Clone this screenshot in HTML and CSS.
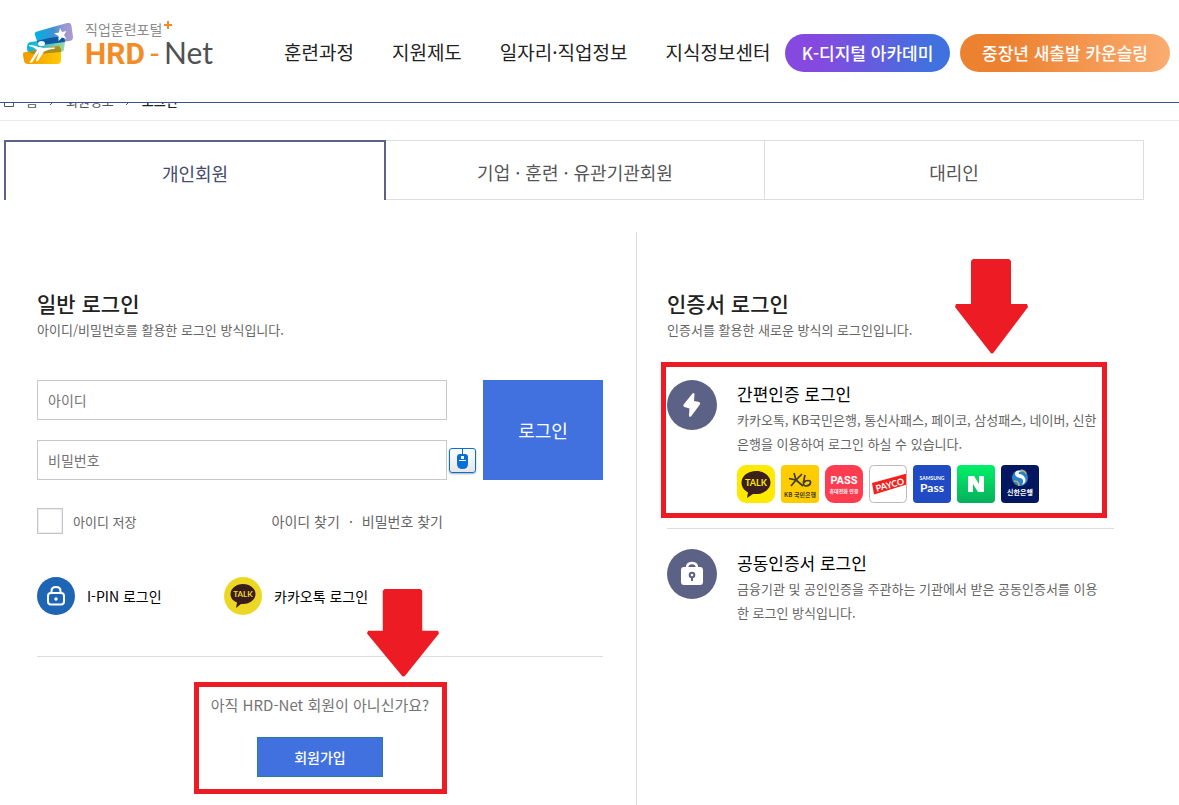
FILE: index.html
```html
<!DOCTYPE html>
<html lang="ko">
<head>
<meta charset="utf-8">
<meta name="viewport" content="width=device-width, initial-scale=1">
<title>HRD-Net 로그인</title>
<link rel="stylesheet" href="styles.css">
</head>
<body>
<header class="header">
  <a class="logo" href="#">
    <svg class="logo-mark" viewBox="0 0 50 41" aria-hidden="true">
      <defs>
        <linearGradient id="sky" x1="0" x2="1"><stop offset="0" stop-color="#00b3e6"/><stop offset=".5" stop-color="#3f8fd0"/><stop offset=".75" stop-color="#9a97d0"/><stop offset="1" stop-color="#a99bd0"/></linearGradient>
        <linearGradient id="sea" x1="0" x2="1"><stop offset="0" stop-color="#00b4e4"/><stop offset=".5" stop-color="#4fbcc0"/><stop offset="1" stop-color="#a5d6a2"/></linearGradient>
        <linearGradient id="sun" x1="0" x2="1"><stop offset="0" stop-color="#f39a00"/><stop offset="1" stop-color="#fdc900"/></linearGradient>
      </defs>
      <path d="M7 19 38 15q4 0 4 4l-1 7q0 3-4 3L8 31Q4 30 4 25q0-5 3-6z" fill="url(#sea)"/>
      <path d="M14 8.500 44 0q4-1 4.500 3L50 14q0 4-4 4l-28 4q-3 0-4-4l-2-6q-1-3 2-3.500z" fill="url(#sky)"/>
      <path d="M14 18 26 15l15-2 1 6-24 3q-3 0-4-4z" fill="#0a5ba3"/>
      <path d="M0 31q0-2 3-2l32-6q2 0 3 3v11q0 4-4 4H5q-4 0-4-4-1-3-1-6z" fill="url(#sun)"/>
      <path d="M6 28.500 35 23q2 0 3 3v3l-23 2q-7 1-9-2.500z" fill="#a98f1c"/>
      <path d="m37 5 2 4 4.500-1-2.500 4 2.500 4-4.500-1.500-3.500 3.500v-5l-4.500-2.500 5-1z" fill="#fff"/>
      <path d="M6 22q6 0 9 2 3 0 5 1l12-.5v1q-7 1-11 3l-6 9.500h-2l3-9-7 10.500H6.500L14 27q-3-3-8-4z" fill="#fff"/>
      <ellipse cx="18.500" cy="20.500" rx="3.500" ry="2.500" fill="#fff"/>
    </svg>
    <span class="logo-text">
      <span class="logo-sub">직업훈련포털<svg class="logo-plus" viewBox="0 0 8 8" aria-hidden="true"><path d="M3 0h2v3h3v2H5v3H3V5H0V3h3z" fill="#f28c28"/></svg></span>
      <span class="logo-name"><b>HRD</b><i>-</i><span>Net</span></span>
    </span>
  </a>
  <nav class="nav">
    <a href="#">훈련과정</a>
    <a href="#">지원제도</a>
    <a href="#">일자리·직업정보</a>
    <a href="#">지식정보센터</a>
  </nav>
  <div class="pills">
    <a class="pill pill-violet" href="#">K-디지털 아카데미</a>
    <a class="pill pill-orange" href="#">중장년 새출발 카운슬링</a>
  </div>
</header>

<div class="crumbs">
  <svg class="crumb-home" viewBox="0 0 12 12" aria-hidden="true"><path d="M1.500 4 6 1l4.500 3v7.500h-9z"/></svg>
  <a href="#">홈</a>
  <svg class="crumb-arrow" viewBox="0 0 6 10" aria-hidden="true"><path d="m1 1 4 4-4 4"/></svg>
  <a href="#">회원정보</a>
  <svg class="crumb-arrow" viewBox="0 0 6 10" aria-hidden="true"><path d="m1 1 4 4-4 4"/></svg>
  <strong>로그인</strong>
</div>

<div class="tabs" role="tablist">
  <button class="tab tab-active" type="button" role="tab" aria-selected="true">개인회원</button>
  <button class="tab" type="button" role="tab" aria-selected="false">기업 · 훈련 · 유관기관회원</button>
  <button class="tab" type="button" role="tab" aria-selected="false">대리인</button>
</div>

<main class="panels">
  <section class="panel panel-left">
    <h2 class="title">일반 로그인</h2>
    <p class="subtitle">아이디/비밀번호를 활용한 로그인 방식입니다.</p>
    <form class="login">
      <div class="fields">
        <input class="field" type="text" placeholder="아이디" aria-label="아이디">
        <span></span>
        <input class="field" type="password" placeholder="비밀번호" aria-label="비밀번호">
        <button class="mouse" type="button" aria-label="마우스 입력기">
          <svg viewBox="0 0 25 23" aria-hidden="true"><path d="M12 0h1v5h-1z" fill="#0670d6"/><path d="M7 8q0-3 3-3h5q3 0 3 3v7q0 5-5.500 5T7 15z" fill="#0670d6"/><path d="M11 7h3v3h-3zM9 11h7v1H9z" fill="#fff"/></svg>
        </button>
      </div>
      <button class="submit" type="submit">로그인</button>
    </form>
    <div class="options">
      <label class="save"><input class="check" type="checkbox">아이디 저장</label>
      <div class="find"><a href="#">아이디 찾기</a><span>·</span><a href="#">비밀번호 찾기</a></div>
    </div>
    <div class="social">
      <a href="#">
        <svg class="social-icon" viewBox="0 0 38 38" aria-hidden="true"><circle cx="19" cy="19" r="19" fill="#1e66b3"/><g fill="none" stroke="#fff" stroke-width="2"><rect x="11" y="16" width="16" height="11.500" rx="3"/><path d="M14.500 16v-2q0-4 4.500-4t4.500 4v2"/></g><circle cx="19" cy="22" r="1.700" fill="#fff"/></svg>
        I-PIN 로그인
      </a>
      <a href="#">
        <svg class="social-icon" viewBox="0 0 38 38" aria-hidden="true"><circle cx="19" cy="19" r="19" fill="#ecd824"/><path d="M19 7c7 0 12.500 4.500 12.500 10S26 27 19 27l-2 0-5 4 1-5.500C9 24 6.500 21 6.500 17 6.500 11.500 12 7 19 7z" fill="#3b1c1c"/><text class="brand-lato" x="19" y="20" font-size="8" fill="#ecd824">TALK</text></svg>
        카카오톡 로그인
      </a>
    </div>
    <div class="join">
      <svg class="arrow arrow-join" viewBox="0 0 73 95" preserveAspectRatio="none" aria-hidden="true"><path d="M18 0h36l2 2v43h16l1 3L39 93q-2 3-4 0L0 48l1-3h15V2z" fill="#ed1c24"/></svg>
      <p>아직 HRD-Net 회원이 아니신가요?</p>
      <button class="join-button" type="button">회원가입</button>
    </div>
  </section>

  <section class="panel panel-right">
    <h2 class="title">인증서 로그인</h2>
    <p class="subtitle">인증서를 활용한 새로운 방식의 로그인입니다.</p>
    <article class="method method-marked">
      <svg class="arrow arrow-method" viewBox="0 0 73 95" preserveAspectRatio="none" aria-hidden="true"><path d="M18 0h36l2 2v43h16l1 3L39 93q-2 3-4 0L0 48l1-3h15V2z" fill="#ed1c24"/></svg>
      <svg class="method-icon" viewBox="0 0 50 50" aria-hidden="true"><circle cx="25" cy="25" r="25" fill="#5c6286"/><path d="M25.500 13.500q2-1.500 2 1L27 21l5 1q2 1 .5 3L24 36.500q-2 1-2-1l.5-7-5-1.500q-2-1-.5-3z" fill="#fff"/></svg>
      <div class="method-body">
        <h3>간편인증 로그인</h3>
        <p>카카오톡, KB국민은행, 통신사패스, 페이코, 삼성패스, 네이버, 신한은행을 이용하여 로그인 하실 수 있습니다.</p>
        <div class="brands">
          <svg viewBox="0 0 38 38" role="img" aria-label="카카오톡"><rect width="38" height="38" rx="9" fill="#ffe900"/><path d="M19 6c8 0 14.500 5 14.500 11.500S27 29 19 29h-3l-6 4 1-5.500C7 25 4.500 22 4.500 17.500 4.500 11 11 6 19 6z" fill="#3b1e1e"/><text class="brand-lato" x="19" y="21" font-size="9" fill="#ffe900">TALK</text></svg>
          <svg viewBox="0 0 38 38" role="img" aria-label="KB국민은행"><rect width="38" height="38" rx="4" fill="#fc0"/><g fill="none" stroke="#3f3a2b" stroke-width="1.700"><path d="M8 13.500 15 15l6-6M13 8l2 7-5 6M15 15l7 6"/><path d="m24 10-1.500 7q-.5 4 2.500 4 4-.5 4.500-3t-2.500-2.500-4 2"/></g><text class="brand-kr" x="19" y="32" font-size="6" fill="#3f3a2b">KB 국민은행</text></svg>
          <svg viewBox="0 0 38 38" role="img" aria-label="PASS"><rect width="38" height="38" rx="9" fill="#ff3c50"/><text class="brand-roboto" x="19" y="19" font-size="11" fill="#fff">PASS</text><text class="brand-kr" x="19" y="28" font-size="5" fill="#fff">휴대전화 인증</text></svg>
          <svg viewBox="0 0 38 38" role="img" aria-label="페이코"><defs><clipPath id="payco"><rect x="1" y="1" width="36" height="36" rx="4"/></clipPath></defs><rect x=".5" y=".5" width="37" height="37" rx="4" fill="#fff" stroke="#bbb"/><g clip-path="url(#payco)"><path d="M3 18 38 8.500v11L5 29.500z" fill="#f5201c"/><text class="brand-lato" x="21" y="23" font-size="9" fill="#fff" transform="rotate(-15 21 20)">PAYCO</text></g></svg>
          <svg viewBox="0 0 38 38" role="img" aria-label="삼성패스"><rect width="38" height="38" rx="4" fill="#204bc4"/><text class="brand-lato" x="19" y="15" font-size="5" fill="#fff">SAMSUNG</text><text class="brand-lato" x="19" y="27" font-size="12" fill="#fff">Pass</text></svg>
          <svg viewBox="0 0 38 38" role="img" aria-label="네이버"><defs><linearGradient id="naver" x2="0" y2="1"><stop stop-color="#00f069"/><stop offset="1" stop-color="#06af5b"/></linearGradient></defs><rect width="38" height="38" rx="4" fill="url(#naver)"/><path d="M11 11h6l5 8v-8h5v16h-6l-5-8v8h-5z" fill="#fff"/></svg>
          <svg viewBox="0 0 38 38" role="img" aria-label="신한은행"><rect width="38" height="38" rx="4" fill="#02175f"/><circle cx="19" cy="13" r="8" fill="#2a83c9"/><path d="M24 6q-10-2-10 3 0 3 5 4t2 7q5-3 3-7t-6-4q-2-3 6-3z" fill="#fff"/><path d="M13 16q5 0 5 5M20 5q5 1 5 4" fill="none" stroke="#c4a964" stroke-width="1.500"/><text class="brand-kr" x="19" y="30" font-size="7" fill="#fff">신한은행</text></svg>
        </div>
      </div>
    </article>
    <article class="method method-plain">
      <svg class="method-icon" viewBox="0 0 50 50" aria-hidden="true"><circle cx="25" cy="25" r="25" fill="#5c6286"/><path d="M20 19q0-5 5-5t5 5" fill="none" stroke="#fff" stroke-width="2.500"/><rect x="14" y="18" width="22" height="18" rx="3" fill="#fff"/><path d="M21.500 18q3.500-4 7 0z" fill="#5c6286"/><circle cx="25" cy="26" r="2.300" fill="none" stroke="#5c6286" stroke-width="2"/><path d="M25 28v4" stroke="#5c6286" stroke-width="2"/></svg>
      <div class="method-body">
        <h3>공동인증서 로그인</h3>
        <p>금융기관 및 공인인증을 주관하는 기관에서 받은 공동인증서를 이용한 로그인 방식입니다.</p>
      </div>
    </article>
  </section>
</main>
</body>
</html>
```

FILE: styles.css
```css
* { box-sizing: border-box; }
body {
  margin: 0;
  min-height: 100vh;
  display: flex;
  flex-direction: column;
  background: #fff;
  color: #222;
  font-family: "Noto Sans CJK KR", sans-serif;
  font-size: 14px;
}
a { color: inherit; text-decoration: none; }
button, input { font: inherit; margin: 0; }
h2, h3, p { margin: 0; font-weight: 400; }
svg { display: block; flex: none; }

/* Header stays above the scrolled page */
.header {
  position: fixed;
  inset: 0 0 auto 0;
  z-index: 2;
  display: flex;
  align-items: center;
  height: 103px;
  padding: 3px 9px 0 23px;
  background: #fff;
  border-bottom: 1px solid #3c5390;
}
.logo { display: flex; gap: 12px; width: 261px; padding-bottom: 20px; }
.logo-mark { width: 50px; height: 41px; margin-top: 4px; }
.logo-text { display: flex; flex-direction: column; }
.logo-sub { display: flex; gap: 2px; font-size: 14px; line-height: 20px; color: #8b8b8b; }
.logo-plus { width: 8px; height: 8px; margin-top: 2px; }
.logo-name { display: flex; gap: 4px; align-items: baseline; line-height: 26px; font-size: 30px; color: #505153; }
.logo-name b { font-family: Roboto, sans-serif; font-weight: 700; color: #f28c28; }
.logo-name i { font-family: Lato, sans-serif; font-style: normal; color: #f28c28; }
.logo-name span { font-family: Lato, sans-serif; font-weight: 400; }
.nav { display: flex; gap: 38px; padding-bottom: 2px; font-size: 19px; white-space: nowrap; }
.pills { display: flex; gap: 10px; margin-left: auto; }
.pill {
  display: flex;
  align-items: center;
  justify-content: center;
  height: 38px;
  border-radius: 19px;
  color: #fff;
  font-size: 17px;
  font-weight: 500;
  white-space: nowrap;
}
.pill-violet { width: 165px; background: linear-gradient(90deg, #8549df 20%, #3f72df 90%); }
.pill-orange { width: 210px; background: linear-gradient(90deg, #ec812f 20%, #faac70); }

.crumbs {
  display: flex;
  align-items: center;
  gap: 11px;
  height: 121px;
  padding: 81px 3px 0;
  border-bottom: 1px solid #ebebeb;
  font-size: 13px;
  color: #555;
}
.crumbs strong { font-weight: 500; color: #222; }
.crumb-home { width: 12px; height: 12px; }
.crumb-arrow { width: 6px; height: 10px; }
.crumbs path { fill: none; stroke: #555; }

.tabs {
  display: grid;
  grid-template-columns: 382fr 379fr 379fr;
  max-width: 1140px;
  width: 100%;
  margin: 19px 0 0 4px;
}
.tab {
  height: 60px;
  padding: 4px 0 0;
  border: 1px solid #ddd;
  border-left: 0;
  background: #fff;
  color: #555;
  font-size: 18px;
}
.tab-active { border: 2px solid #5c6286; border-bottom: 0; color: #444b6b; }

.panels {
  flex: 1;
  display: grid;
  grid-template-columns: 633fr 507fr;
  max-width: 1140px;
  width: 100%;
  margin: 32px 0 0 4px;
}
.panel { padding-top: 57px; }
.panel-left { padding-left: 33px; padding-right: 33px; padding-bottom: 11px; border-right: 1px solid #ddd; }
.panel-right { padding-left: 30px; padding-right: 30px; }
.title { font-size: 21px; line-height: 28px; font-weight: 500; }
.subtitle { margin-top: 3px; font-size: 13px; line-height: 20px; color: #666; }

.login { display: flex; gap: 7px; margin-top: 40px; }
.fields { flex: 1; display: grid; grid-template-columns: 1fr 27px; gap: 20px 2px; align-items: center; }
.field { width: 100%; height: 40px; padding: 0 10px; border: 1px solid #c8c8cd; background: #fff; }
.field::placeholder { color: #757575; }
.mouse {
  height: 25px;
  padding: 0;
  border: 1px solid #0670d6;
  border-radius: 3px;
  background: linear-gradient(#fff, #e6e6e6);
  box-shadow: 0 1px 2px #aaa;
}
.mouse svg { width: 25px; height: 23px; }
.submit { width: 120px; border: 0; background: #4171df; color: #fff; font-size: 18px; }

.options { display: flex; justify-content: space-between; align-items: center; margin-top: 28px; max-width: 406px; color: #666; }
.save { display: flex; align-items: center; gap: 10px; font-size: 13px; }
.check { appearance: none; width: 26px; height: 26px; border: 1px solid #c4c4cf; box-shadow: inset 0 0 0 1px #eee; }
.find { display: flex; gap: 9px; }

.social {
  display: grid;
  grid-template-columns: 187px 1fr;
  margin-top: 43px;
  padding-bottom: 41px;
  border-bottom: 1px solid #ddd;
  color: #000;
}
.social a { display: flex; align-items: center; gap: 12px; }
.social-icon { width: 38px; height: 38px; }

.join {
  position: relative;
  width: 253px;
  margin: 25px auto 0;
  padding: 6px 0 12px;
  border: 5px solid #ed1c24;
  text-align: center;
}
.join p { font-size: 15px; line-height: 24px; color: #757575; }
.join-button { width: 126px; height: 40px; margin-top: 20px; border: 1px solid #27808c; background: #4171df; color: #fff; font-weight: 500; vertical-align: top; }
.arrow { position: absolute; }
.arrow-join { width: 72px; height: 88px; left: 168px; top: -98px; }
.arrow-method { width: 73px; height: 95px; left: 289px; top: -108px; }

.method { position: relative; display: flex; gap: 20px; }
.method-marked { margin: 22px 7px 10px -6px; padding: 13px 0 10px 1px; border: 5px solid #ed1c24; }
.method-plain { padding-top: 20px; padding-right: 14px; border-top: 1px solid #ddd; }
.method-icon { width: 50px; height: 50px; }
.method h3 { font-size: 17px; line-height: 28px; color: #000; }
.method p { font-size: 13px; line-height: 24px; color: #666; }
.brands { display: flex; gap: 6px; margin-top: 9px; }
.brands svg { width: 38px; height: 38px; }
.brand-lato, .brand-kr, .brand-roboto { text-anchor: middle; font-weight: 700; }
.brand-lato { font-family: Lato, sans-serif; }
.brand-roboto { font-family: Roboto, sans-serif; }
.brand-kr { font-family: "Noto Sans CJK KR", sans-serif; }
```
